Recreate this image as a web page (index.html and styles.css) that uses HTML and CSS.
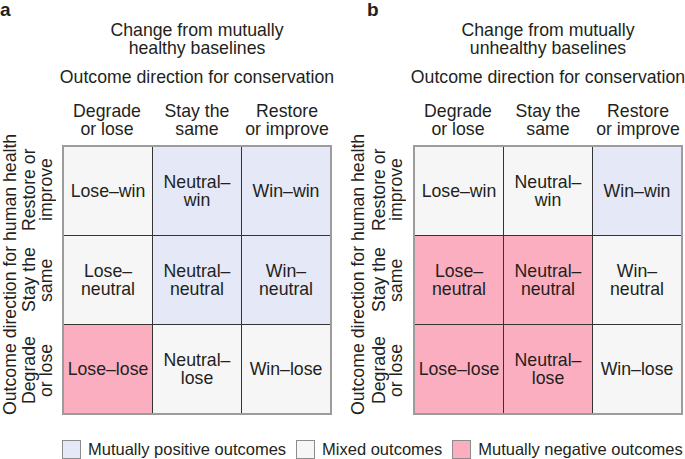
FILE: index.html
```html
<!DOCTYPE html>
<html>
<head>
<meta charset="utf-8">
<link rel="stylesheet" href="styles.css">
</head>
<body>
<div class="figure">
  <div class="panels">
    <section class="panel panel-a">
      <div class="tag">a</div>
      <div class="title">Change from mutually<br>healthy baselines</div>
      <div class="axis">Outcome direction for conservation</div>
      <div class="col-heads">
        <div>Degrade<br>or lose</div>
        <div>Stay the<br>same</div>
        <div>Restore<br>or improve</div>
      </div>
      <div class="axis-y">Outcome direction for human health</div>
      <div class="row-heads">
        <div>Restore or<br>improve</div>
        <div>Stay the<br>same</div>
        <div>Degrade<br>or lose</div>
      </div>
      <div class="matrix">
        <div class="cell mix">Lose–win</div>
        <div class="cell pos">Neutral–<br>win</div>
        <div class="cell pos">Win–win</div>
        <div class="cell mix">Lose–<br>neutral</div>
        <div class="cell pos">Neutral–<br>neutral</div>
        <div class="cell pos">Win–<br>neutral</div>
        <div class="cell neg">Lose–lose</div>
        <div class="cell mix">Neutral–<br>lose</div>
        <div class="cell mix">Win–lose</div>
      </div>
    </section>
    <section class="panel panel-b">
      <div class="tag">b</div>
      <div class="title">Change from mutually<br>unhealthy baselines</div>
      <div class="axis">Outcome direction for conservation</div>
      <div class="col-heads">
        <div>Degrade<br>or lose</div>
        <div>Stay the<br>same</div>
        <div>Restore<br>or improve</div>
      </div>
      <div class="axis-y">Outcome direction for human health</div>
      <div class="row-heads">
        <div>Restore or<br>improve</div>
        <div>Stay the<br>same</div>
        <div>Degrade<br>or lose</div>
      </div>
      <div class="matrix">
        <div class="cell mix">Lose–win</div>
        <div class="cell mix">Neutral–<br>win</div>
        <div class="cell pos">Win–win</div>
        <div class="cell neg">Lose–<br>neutral</div>
        <div class="cell neg">Neutral–<br>neutral</div>
        <div class="cell mix">Win–<br>neutral</div>
        <div class="cell neg">Lose–lose</div>
        <div class="cell neg">Neutral–<br>lose</div>
        <div class="cell mix">Win–lose</div>
      </div>
    </section>
  </div>
  <div class="legend">
    <div class="key"><span class="swatch pos"></span><span>Mutually positive outcomes</span></div>
    <div class="key"><span class="swatch mix"></span><span>Mixed outcomes</span></div>
    <div class="key"><span class="swatch neg"></span><span>Mutually negative outcomes</span></div>
  </div>
</div>
</body>
</html>
```
FILE: styles.css
```css
* {
  box-sizing: border-box;
  margin: 0;
  padding: 0;
}

body {
  margin: 0;
  background: #ffffff;
  color: #231f20;
  font-family: "Liberation Sans", Arial, sans-serif;
  font-size: 17.7px;
  line-height: 18px;
}

.figure {
  width: 685px;
  height: 459px;
  overflow: hidden;
}

.panels {
  display: flex;
}

.panel {
  display: grid;
  grid-template-columns: 19px 42px 270px;
  grid-template-areas:
    "tag tag title"
    ". . axis"
    ". . cols"
    "ay rows matrix";
}

.panel-a {
  margin-left: 1px;
}

.panel-b {
  margin-left: 17px;
  grid-template-columns: 21px 43px 270px;
}

.tag {
  grid-area: tag;
  font-weight: bold;
  font-size: 19px;
  margin-top: 1px;
}

.panel-a .tag {
  margin-left: -1px;
}

.panel-b .tag {
  margin-left: 18px;
}

.title {
  grid-area: title;
  text-align: center;
  margin-top: 21px;
  line-height: 18.4px;
}

.axis {
  grid-area: axis;
  text-align: center;
  white-space: nowrap;
  margin: 10px -10px 0;
}

.col-heads {
  grid-area: cols;
  display: grid;
  grid-template-columns: repeat(3, 1fr);
  text-align: center;
  margin-top: 16.5px;
}

.axis-y {
  grid-area: ay;
  writing-mode: vertical-rl;
  transform: rotate(180deg);
  text-align: center;
  white-space: nowrap;
  margin-top: 6.5px;
  height: 270px;
  width: 18px;
}

.row-heads {
  grid-area: rows;
  display: flex;
  flex-direction: column;
  align-items: flex-start;
  margin-top: 6.5px;
  height: 270px;
}

.row-heads > div {
  flex: 1;
  writing-mode: vertical-rl;
  transform: rotate(180deg);
  text-align: center;
  line-height: 17px;
  width: 35px;
  margin-left: 1px;
  white-space: nowrap;
}

.matrix {
  grid-area: matrix;
  margin-top: 6.5px;
  height: 270px;
  display: grid;
  grid-template-columns: repeat(3, 1fr);
  grid-template-rows: repeat(3, 1fr);
  gap: 1px;
  background: #343434;
  border: 2px solid #9c9c9c;
}

.cell {
  display: flex;
  align-items: center;
  justify-content: center;
  text-align: center;
}

.pos {
  background: #e4e8f7;
}

.mix {
  background: #f6f6f6;
}

.neg {
  background: #fbaec0;
}

.legend {
  display: flex;
  align-items: center;
  margin: 25px 0 0 62px;
  font-size: 16.5px;
  line-height: 18px;
}

.key {
  display: flex;
  align-items: center;
  gap: 7px;
  margin-right: 10px;
  white-space: nowrap;
}

.swatch {
  display: block;
  width: 19px;
  height: 19px;
  border: 1px solid #8c8c8c;
}
```
